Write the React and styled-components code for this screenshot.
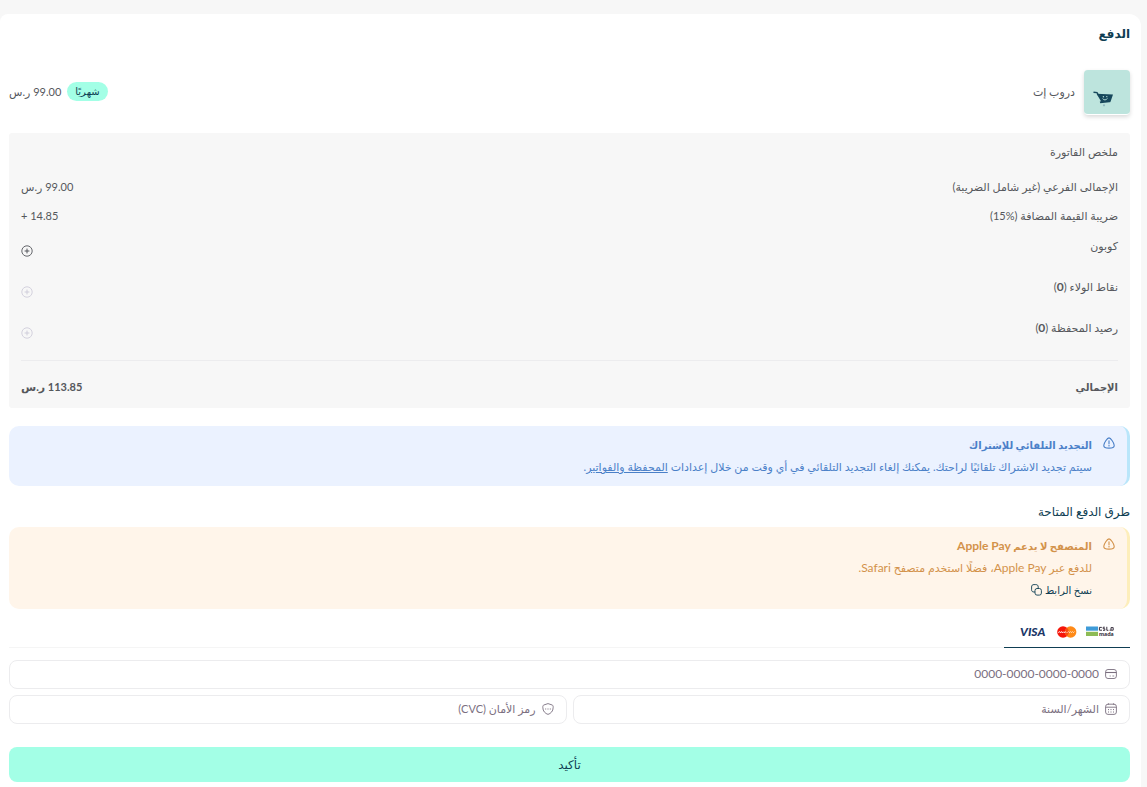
import React from "react";
import styled, { createGlobalStyle, css } from "styled-components";

const colors = {
  page: "#f7f7f7",
  mint: "#a3ffe6",
  navy: "#0f3e53",
  text: "#55575c",
  line: "#ececee",
  muted: "#7b6f7f",
};

const App = () => {
  return (
    <Page dir="rtl" lang="ar">
      <GlobalStyle />
      <Card>
        <Title>الدفع</Title>
        <Product>
          <Thumbnail>
            <CartLogo />
          </Thumbnail>
          <ProductName>دروب إت</ProductName>
          <Badge>شهريًا</Badge>
          <span>99.00 ر.س</span>
        </Product>

        <Summary>
          <SummaryTitle>ملخص الفاتورة</SummaryTitle>
          <Row>
            <span>الإجمالى الفرعي (غير شامل الضريبة)</span>
            <span>99.00 ر.س</span>
          </Row>
          <Row>
            <span>
              ضريبة القيمة المضافة <bdi dir="ltr">(15%)</bdi>
            </span>
            <span dir="ltr">+ 14.85</span>
          </Row>
          <ActionRow>
            <span>كوبون</span>
            <AddButton aria-label="كوبون">
              <PlusIcon />
            </AddButton>
          </ActionRow>
          <ActionRow>
            <span>
              نقاط الولاء (<Points>0</Points>)
            </span>
            <AddButton aria-label="نقاط الولاء" disabled>
              <PlusIcon />
            </AddButton>
          </ActionRow>
          <ActionRow>
            <span>
              رصيد المحفظة (<Points>0</Points>)
            </span>
            <AddButton aria-label="رصيد المحفظة" disabled>
              <PlusIcon />
            </AddButton>
          </ActionRow>
          <TotalRow>
            <TotalLabel>الإجمالي</TotalLabel>
            <span>113.85 ر.س</span>
          </TotalRow>
        </Summary>

        <Alert $tone="info">
          <WarningIcon />
          <div>
            <AlertTitle>التجديد التلقائي للإشتراك</AlertTitle>
            <AlertText>
              سيتم تجديد الاشتراك تلقائيًا لراحتك. يمكنك إلغاء التجديد التلقائي في أي وقت من خلال إعدادات{" "}
              <a href="#wallet">المحفظة والفواتير</a>.
            </AlertText>
          </div>
        </Alert>

        <MethodsTitle>طرق الدفع المتاحة</MethodsTitle>
        <Alert $tone="warning">
          <WarningIcon />
          <div>
            <AlertTitle>
              المتصفح لا يدعم <Latin>Apple Pay</Latin>
            </AlertTitle>
            <AlertText>
              للدفع عبر <Latin>Apple Pay</Latin>، فضلًا استخدم متصفح <Latin>Safari</Latin>.
            </AlertText>
            <CopyButton>
              نسخ الرابط
              <CopyIcon />
            </CopyButton>
          </div>
        </Alert>

        <Tabs>
          <Tab aria-label="mada, Mastercard, Visa">
            <MadaLogo />
            <MastercardLogo />
            <VisaLogo />
          </Tab>
        </Tabs>

        <Fields>
          <Field $wide>
            <CardIcon />
            <input aria-label="رقم البطاقة" placeholder="0000-0000-0000-0000" />
          </Field>
          <Field>
            <CalendarIcon />
            <input aria-label="الشهر/السنة" placeholder="الشهر/السنة" />
          </Field>
          <Field>
            <ShieldIcon />
            <input aria-label="رمز الأمان (CVC)" placeholder="رمز الأمان (CVC)" />
          </Field>
        </Fields>
        <Submit>تأكيد</Submit>
      </Card>
    </Page>
  );
};

const CartLogo = () => (
  <svg width="20" height="16" viewBox="0 0 20 16" aria-hidden="true">
    <path d="M0.5 1.2 L4 1.6 L6 5" fill="none" stroke="#17485c" strokeWidth="1.4" />
    <path d="M3.5 2.8 L20 3.4 L17.6 10.4 Q17.3 11.2 16.4 11.3 L7.2 12.2 L6.8 10.6 L8 10.2 Z" fill="#17485c" />
    <path d="M9.6 7.6 Q12 10.4 14.6 7.2" fill="none" stroke="#bde4dd" strokeWidth="0.9" />
    <circle cx="10.4" cy="5.8" r="0.7" fill="#bde4dd" />
    <circle cx="13.8" cy="5.6" r="0.7" fill="#bde4dd" />
    <circle cx="11" cy="14.3" r="1.1" fill="#91b9c0" />
  </svg>
);

const PlusIcon = () => (
  <svg width="12" height="12" viewBox="0 0 12 12" fill="none" stroke="currentColor" aria-hidden="true">
    <circle cx="6" cy="6" r="5.2" strokeWidth="0.9" />
    <path d="M6 4v4M4 6h4" strokeWidth="1" strokeLinecap="round" />
  </svg>
);

const WarningIcon = () => (
  <svg width="12" height="12" viewBox="0 0 12 12" fill="none" stroke="currentColor" aria-hidden="true">
    <path
      d="M6 0.9C4.1 0.9 1 6.2 0.8 8.2C0.6 10.3 2.4 11.1 6 11.1S11.4 10.3 11.2 8.2C11 6.2 7.9 0.9 6 0.9Z"
      strokeWidth="1.1"
    />
    <path d="M6 3.8v2.9M6 8.2v0.7" strokeWidth="1.1" strokeLinecap="round" />
  </svg>
);

const CopyIcon = () => (
  <svg width="11" height="12" viewBox="0 0 11 12" fill="none" stroke="currentColor" aria-hidden="true">
    <rect x="4" y="4.5" width="6.4" height="6.6" rx="2" strokeWidth="0.9" />
    <path d="M4 8H3C1.4 8 0.6 7.3 0.6 5.8V3C0.6 1.3 1.4 0.6 3 0.6H4.8C6.4 0.6 7.2 1.3 7.2 3V4.5" strokeWidth="0.9" />
  </svg>
);

const CardIcon = () => (
  <svg width="12" height="12" viewBox="0 0 12 12" fill="none" stroke="currentColor" aria-hidden="true">
    <rect x="0.6" y="1.5" width="10.8" height="9" rx="2.4" strokeWidth="0.9" />
    <path d="M0.6 4.5h10.8" strokeWidth="1.1" />
    <path d="M4.6 8h1.2M7.4 8h1.8" strokeWidth="0.8" />
  </svg>
);

const CalendarIcon = () => (
  <svg width="12" height="12" viewBox="0 0 12 12" fill="none" stroke="currentColor" aria-hidden="true">
    <rect x="0.6" y="1.2" width="10.8" height="10.2" rx="2.4" strokeWidth="0.9" />
    <path d="M0.6 4.2h10.8" strokeWidth="0.9" />
    <path d="M3.4 0.3v1.4M8.6 0.3v1.4" strokeWidth="0.9" />
    <path d="M3 6.6h1M5.5 6.6h1M8 6.6h1M3 9h1M5.5 9h1M8 9h1" strokeWidth="1" />
  </svg>
);

const ShieldIcon = () => (
  <svg width="12" height="12" viewBox="0 0 12 12" fill="none" stroke="currentColor" aria-hidden="true">
    <path
      d="M6 0.6L10.2 2C10.9 2.3 11.2 3 11.2 4.3C11.2 8.5 8.6 10.5 6 11.4C3.4 10.5 0.8 8.5 0.8 4.3C0.8 3 1.1 2.3 1.8 2Z"
      strokeWidth="0.9"
    />
    <path d="M3.2 6h1M5.5 6h1M7.8 6h1" strokeWidth="1.1" />
  </svg>
);

const MadaLogo = () => (
  <svg width="28" height="11" viewBox="0 0 28 11" aria-hidden="true">
    <rect x="0" y="0.5" width="12" height="4.2" fill="#3f9bd8" />
    <rect x="0" y="5.8" width="12" height="4.2" fill="#8dbb55" />
    <path
      d="M15.8 1.4h-2.4v2.8h2.6M18.8 1.2h-1.6v1.5h1.6v1.6h-1.8M20.8 0.8v3.5h1.6M23.6 4.2h3.6V1.6h-2.2v2.4"
      fill="none"
      stroke="#3a3340"
      strokeWidth="1"
    />
    <text x="13" y="10" fontSize="6" fontWeight="900" fontFamily="Lato, sans-serif" fill="#3a3340" direction="ltr">
      mada
    </text>
  </svg>
);

const MastercardLogo = () => (
  <svg width="20" height="12" viewBox="0 0 20 12" aria-hidden="true">
    <circle cx="6" cy="6" r="5.8" fill="#f5160a" />
    <circle cx="13.6" cy="6" r="5.8" fill="#ff8a17" />
    <path d="M9.8 1.6a5.8 5.8 0 0 1 0 8.8a5.8 5.8 0 0 1 0-8.8Z" fill="#f94c10" />
    <path d="M1.4 6.8l1-1.3 1 1.3 1-1.3.8 1.3 1-1 1 1 1-1.2 1 1.2" fill="none" stroke="#fff" strokeWidth="0.9" />
    <path d="M10.4 6.6l1-1 1 1 1-1 1 1 1-1 1 1 1-1" fill="none" stroke="#fff" strokeWidth="0.7" />
  </svg>
);

const VisaLogo = () => (
  <svg width="28" height="16" viewBox="0 0 28 16" aria-hidden="true">
    <text
      x="0"
      y="12"
      fontSize="12"
      fontWeight="900"
      fontStyle="italic"
      fontFamily="Lato, sans-serif"
      fill="#1b3768"
      direction="ltr"
    >
      VISA
    </text>
  </svg>
);

const GlobalStyle = createGlobalStyle`
  * {
    box-sizing: border-box;
  }
  body {
    margin: 0;
    background: ${colors.page};
  }
  h1, h2, h3, p {
    margin: 0;
  }
  button, input {
    font: inherit;
  }
  button {
    cursor: pointer;
  }
  svg {
    display: block;
    flex-shrink: 0;
  }
`;

const Page = styled.div`
  padding: 14px 6px 0 0;
  font-family: Lato, "DejaVu Sans", sans-serif;
  font-size: 11px;
  line-height: 20px;
  color: ${colors.text};
`;

const Card = styled.main`
  padding: 10px 11px 5px 9px;
  background: #fff;
  border-radius: 8px 12px 0 0;
`;

const Title = styled.h1`
  font-size: 12px;
  font-weight: bold;
  color: ${colors.navy};
`;

const Product = styled.div`
  display: flex;
  align-items: center;
  margin: 24px 0 18px;
`;

const Thumbnail = styled.div`
  display: flex;
  align-items: flex-end;
  width: 46px;
  height: 45px;
  padding: 0 17px 7px 0;
  margin: 2px 0 0 9px;
  border-radius: 4px;
  background: #bde4dd;
  border-bottom: 1px solid #fff;
  box-shadow: 0 2px 4px rgba(0, 0, 0, 0.15);
`;

const ProductName = styled.span`
  margin-left: auto;
`;

const Badge = styled.span`
  padding: 0 8px;
  margin-left: 6px;
  border-radius: 10px;
  background: ${colors.mint};
  color: ${colors.navy};
  font-size: 10px;
  line-height: 19px;
`;

const Latin = styled.bdi`
  font-size: 12px;
  line-height: 1;
`;

const Points = styled.b`
  font-size: 12px;
  line-height: 1;
`;

const Summary = styled.section`
  padding: 9px 12px 11px;
  border-radius: 3px;
  background: ${colors.page};
`;

const SummaryTitle = styled.h2`
  margin-bottom: 15px;
  font-size: 11px;
  font-weight: 400;
`;

const Row = styled.div`
  display: flex;
  justify-content: space-between;
  align-items: flex-start;
  height: 29px;
`;

const ActionRow = styled(Row)`
  height: 41px;
  padding-top: 1px;
`;

const TotalRow = styled(Row)`
  height: 37px;
  margin-top: 2px;
  padding-top: 16px;
  border-top: 1px solid ${colors.line};
  font-weight: bold;
`;

const TotalLabel = styled.span`
  font-size: 10px;
`;

const AddButton = styled.button`
  padding: 9px 0 5px;
  border: 0;
  background: none;
  color: ${colors.text};

  &:disabled {
    color: #cfcdda;
    cursor: default;
  }
`;

const tones = {
  info: css`
    background: #ebf2ff;
    border-color: #b9e6fa;
    color: #4a80c8;
  `,
  warning: css`
    background: #fff5ea;
    border-color: #fdeebb;
    color: #d3924a;
  `,
};

const Alert = styled.div`
  display: flex;
  gap: 11px;
  padding: 9px 12px 8px;
  border-radius: 10px;
  border-right: 3px solid;
  ${(props) => tones[props.$tone]}

  ${Summary} + & {
    margin-top: 18px;
  }
  > svg {
    margin-top: 2px;
  }
`;

const AlertTitle = styled.h3`
  font-size: 10px;
  line-height: 20px;
  font-weight: bold;
`;

const AlertText = styled.p`
  margin: 2px 0 1px;
  line-height: 20px;

  a {
    color: inherit;
  }
`;

const CopyButton = styled.button`
  display: flex;
  align-items: center;
  gap: 3px;
  padding: 0;
  border: 0;
  background: none;
  color: ${colors.navy};
  font-size: 10px;
  line-height: 22px;
`;

const MethodsTitle = styled.h2`
  margin: 16px 0 5px;
  font-size: 12px;
  font-weight: 400;
  color: ${colors.navy};
`;

const Tabs = styled.div`
  display: flex;
  margin: 7px 0 12px;
  border-bottom: 1px solid #f5f5f5;
`;

const Tab = styled.button`
  display: flex;
  align-items: center;
  gap: 9px;
  height: 32px;
  padding: 0 16px;
  margin-bottom: -1px;
  border: 0;
  border-bottom: 1px solid ${colors.navy};
  background: none;
`;

const Fields = styled.div`
  display: grid;
  grid-template-columns: 1fr 1fr;
  gap: 6px;
`;

const Field = styled.label`
  display: flex;
  align-items: center;
  gap: 6px;
  height: 29px;
  padding: 0 12px 2px;
  border: 1px solid ${colors.line};
  border-radius: 8px;
  color: ${colors.muted};
  ${(props) =>
    props.$wide &&
    css`
      grid-column: 1 / -1;
      font-size: 12px;
    `}

  input {
    flex: 1;
    min-width: 0;
    padding: 0;
    border: 0;
    outline: 0;
    background: none;
    color: inherit;
  }
  input::placeholder {
    color: inherit;
    opacity: 1;
  }
`;

const Submit = styled.button`
  width: 100%;
  height: 35px;
  margin-top: 23px;
  border: 0;
  border-radius: 8px;
  background: ${colors.mint};
  color: ${colors.navy};
  font-size: 12px;
`;

export default App;
